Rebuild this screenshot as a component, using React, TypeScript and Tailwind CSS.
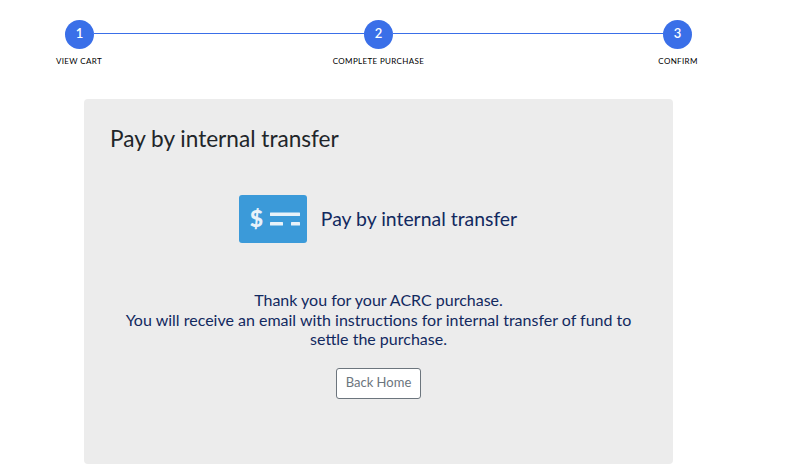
export default function App() {
  return (
    <div className="w-[796px] h-[470px] overflow-hidden bg-white font-['Lato','Noto_Sans',sans-serif] text-[#212529]">
      <div className="pt-5 pl-[19px] w-[738px]">
        <div className="mx-[46px] flex items-center">
          <Circle n="1" />
          <div className="mb-[2px] h-px flex-1 bg-[#3a6fe8]" />
          <Circle n="2" />
          <div className="mb-[2px] h-px flex-1 bg-[#3a6fe8]" />
          <Circle n="3" />
        </div>
        <div className="mt-[6px] flex justify-between">
          <Label text="VIEW CART" />
          <Label text="COMPLETE PURCHASE" />
          <Label text="CONFIRM" />
        </div>
      </div>
      <div className="ml-[84px] mt-[32px] h-[365px] w-[589px] rounded bg-[#ececec] px-[26px] pt-[26px]">
        <h1 className="text-[22.6px] leading-[28px] font-normal">Pay by internal transfer</h1>
        <div className="mt-[42px] flex items-center justify-center gap-[14px] pr-[1px]">
          <svg width="68" height="48" viewBox="0 0 68 48">
            <rect width="68" height="48" rx="3" fill="#3b9ad9" />
            <text x="17.5" y="32" textAnchor="middle" fontFamily="Lato, sans-serif" fontWeight="900" fontSize="23" fill="#e8f2f9">$</text>
            <rect x="31" y="17.5" width="30" height="3.5" rx="0.5" fill="#e8f2f9" />
            <rect x="31" y="27" width="13" height="3.5" rx="0.5" fill="#e8f2f9" />
            <rect x="52" y="27" width="9" height="3.5" rx="0.5" fill="#e8f2f9" />
          </svg>
          <span className="text-[19.4px] leading-7 text-[#12295f]">Pay by internal transfer</span>
        </div>
        <p className="mt-[47px] text-center text-base leading-[19.5px] text-[#12295f]">
          Thank you for your ACRC purchase.
          <br />
          You will receive an email with instructions for internal transfer of fund to settle the purchase.
        </p>
        <div className="mt-[19px] flex justify-center">
          <button className="h-[31px] w-[85px] rounded-[3px] border border-[#6c757d] bg-white text-[13px] text-[#6c757d]">Back Home</button>
        </div>
      </div>
    </div>
  );
}

function Circle({ n }: { n: string }) {
  return (
    <div className="flex h-[29px] w-[29px] items-center justify-center rounded-full bg-[#3a6fe8] pb-px text-[13px] font-semibold text-white">{n}</div>
  );
}

function Label({ text }: { text: string }) {
  return <div className="w-[120px] text-center text-[8px] leading-[12px] tracking-[0.35px] text-black">{text}</div>;
}
